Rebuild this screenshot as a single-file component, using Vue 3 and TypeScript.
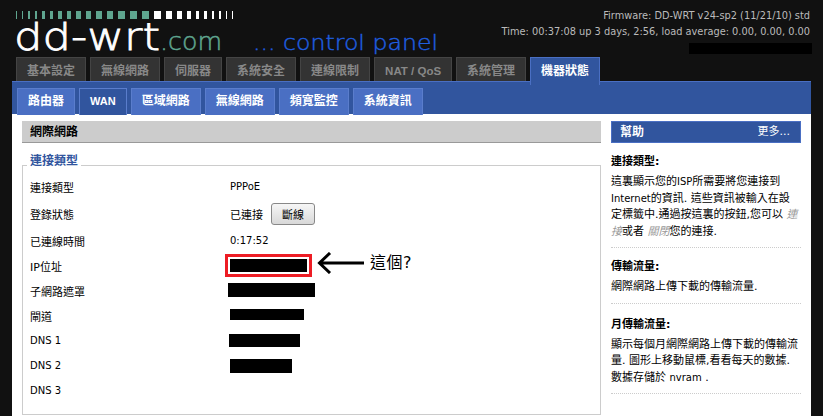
<template>
  <div class="page">
    <header class="header">
      <div class="logo">
        <div class="ticks">
          <span
            v-for="(t, i) in ticks"
            :key="i"
            class="tick"
            :style="{ width: t.w + 'px', marginLeft: t.gap + 'px', background: t.color }"
          ></span>
        </div>
        <svg class="logo-text" width="440" height="36" viewBox="0 0 440 36">
          <text x="0" y="30" class="logo-dd" textLength="146" lengthAdjust="spacingAndGlyphs">dd-wrt</text>
          <text x="146" y="30" class="logo-com" textLength="62" lengthAdjust="spacingAndGlyphs">.com</text>
          <text x="239" y="30" class="logo-panel" textLength="185" lengthAdjust="spacingAndGlyphs">... control panel</text>
        </svg>
      </div>
      <div class="info">
        <div>Firmware: DD-WRT v24-sp2 (11/21/10) std</div>
        <div>Time: 00:37:08 up 3 days, 2:56, load average: 0.00, 0.00, 0.00</div>
        <div class="wan-ip"></div>
      </div>
    </header>

    <nav class="tabs">
      <a
        v-for="t in mainTabs"
        :key="t"
        class="tab"
        :class="{ active: t === '機器狀態', qos: t === 'NAT / QoS' }"
      >{{ t }}</a>
    </nav>

    <div class="subbar">
      <a v-for="t in subTabs" :key="t" class="subtab" :class="{ current: t === 'WAN' }">{{ t }}</a>
    </div>

    <div class="content">
      <main class="main">
        <h2 class="title">網際網路</h2>
        <fieldset class="box">
          <legend>連接類型</legend>
          <div v-for="r in rows" :key="r.label" class="row" :class="{ tall: r.button }">
            <div class="label" :class="{ latin: r.latinLabel }">{{ r.label }}</div>
            <div class="value" :class="{ latin: r.latinValue }">
              <span
                v-if="r.bar"
                class="bar"
                :style="{ width: r.bar + 'px', height: r.barH + 'px', marginLeft: r.off + 'px', marginTop: r.up + 'px' }"
              ></span>
              <template v-else>{{ r.value }}</template>
              <button v-if="r.button" class="btn">{{ r.button }}</button>
            </div>
          </div>
          <div class="callout">
            <div class="redbox"><span></span></div>
            <svg class="arrow" width="50" height="22" viewBox="0 0 50 22">
              <path d="M48 11H4M14 1 3.5 11 14 21" fill="none" stroke="#000" stroke-width="3" />
            </svg>
            <span class="callout-text">這個?</span>
          </div>
        </fieldset>
      </main>

      <aside class="help">
        <div class="help-head"><b>幫助</b><a>更多...</a></div>
        <dl>
          <dt>連接類型:</dt>
          <dd>這裏顯示您的<span class="latin">ISP</span>所需要將您連接到<br /><span class="latin">Internet</span>的資訊. 這些資訊被輸入在設<br />定標籤中.通過按這裏的按鈕,您可以 <i>連<br />接</i>或者 <i>關閉</i>您的連接.</dd>
          <dt>傳輸流量:</dt>
          <dd>網際網路上傳下載的傳輸流量.</dd>
          <dt>月傳輸流量:</dt>
          <dd>顯示每個月網際網路上傳下載的傳輸流<br />量. 圖形上移動鼠標,看看每天的數據.<br />數據存儲於 <span class="latin">nvram</span> .</dd>
        </dl>
      </aside>
    </div>
  </div>
</template>

<script setup lang="ts">
interface Row {
  label: string;
  value?: string;
  button?: string;
  bar?: number;
  barH?: number;
  off?: number;
  up?: number;
  latinLabel?: boolean;
  latinValue?: boolean;
}

const tickWidths = [1, 1, 2, 2, 3, 3, 4, 4, 5, 5, 6, 6, 7, 7, 7, 7, 6, 5, 4, 3, 3, 2, 2, 1, 1];

const ticks = tickWidths.map((w, i) => ({
  w,
  gap: i === 0 ? 0 : 5,
  color: i < 15 ? "#5fa58f" : "#fff",
}));

const mainTabs = ["基本設定", "無線網路", "伺服器", "系統安全", "連線限制", "NAT / QoS", "系統管理", "機器狀態"];
const subTabs = ["路由器", "WAN", "區域網路", "無線網路", "頻寬監控", "系統資訊"];

const rows: Row[] = [
  { label: "連接類型", value: "PPPoE", latinValue: true },
  { label: "登錄狀態", value: "已連接", button: "斷線" },
  { label: "已連線時間", value: "0:17:52", latinValue: true },
  { label: "IP位址" },
  { label: "子網路遮罩", bar: 87, barH: 14, off: -2, up: -2 },
  { label: "閘道", bar: 74, barH: 11, off: 0, up: -2 },
  { label: "DNS 1", bar: 71, barH: 13, off: -1, up: 0, latinLabel: true },
  { label: "DNS 2", bar: 62, barH: 14, off: 0, up: 0, latinLabel: true },
  { label: "DNS 3", latinLabel: true },
];
</script>

<style scoped>
.page {
  width: 823px;
  height: 416px;
  overflow: hidden;
  background: #111;
  font-family: "DejaVu Sans", "Noto Sans CJK TC", sans-serif;
  font-size: 11px;
  color: #000;
}

.latin {
  font-size: 10px;
}

.header {
  height: 57px;
  display: flex;
  justify-content: space-between;
  padding: 11px 13px 0 14px;
  box-sizing: border-box;
}

.ticks {
  display: flex;
  height: 8px;
  margin-left: 2px;
}

.logo-text {
  display: block;
  margin-top: 1px;
  overflow: visible;
}

.logo-dd,
.logo-com,
.logo-panel {
  font-family: "DejaVu Sans", sans-serif;
  font-weight: 200;
}

.logo-dd {
  fill: #fff;
  stroke: #fff;
  stroke-width: 0.8;
  font-size: 38px;
}

.logo-com {
  fill: #5fa58f;
  stroke: #5fa58f;
  stroke-width: 0.5;
  font-size: 24px;
}

.logo-panel {
  fill: #1f5fe0;
  stroke: #1f5fe0;
  stroke-width: 0.4;
  font-size: 22px;
}

.info {
  text-align: right;
  color: #bbb;
  font-size: 9.8px;
  line-height: 16px;
  margin-top: -3px;
  white-space: nowrap;
}

.wan-ip {
  width: 123px;
  height: 11px;
  margin: 3px -2px 0 auto;
  background: #000;
}

.tabs {
  display: flex;
  gap: 4px;
  height: 24px;
  padding-left: 16px;
  position: relative;
  z-index: 1;
}

.tab {
  box-sizing: border-box;
  height: 24px;
  padding: 3px 10px 0;
  background: #333;
  border: 1px solid #444;
  border-bottom: 0;
  color: #888;
  font-family: "Liberation Sans", "Noto Sans CJK TC", sans-serif;
  font-weight: 700;
  font-size: 12px;
  line-height: 20px;
  text-align: center;
  white-space: nowrap;
}

.tab.qos {
  font-size: 11.5px;
}

.tab.active {
  height: 28px;
  background: #31559e;
  border: 1px solid #4a6fc3;
  border-bottom: 0;
  color: #fff;
}

.subbar {
  box-sizing: border-box;
  width: 799px;
  height: 33px;
  margin-left: 12px;
  padding: 6px 0 0 5px;
  background: #31559e;
  border-top: 1px solid #4a6fc3;
  display: flex;
  gap: 4px;
}

.subtab {
  box-sizing: border-box;
  height: 27px;
  padding: 0 10px;
  background: #4a6fc3;
  border: 1px solid #5a7dcc;
  border-bottom: 0;
  color: #fff;
  font-family: "Liberation Sans", "Noto Sans CJK TC", sans-serif;
  font-weight: 700;
  font-size: 12px;
  line-height: 25px;
  white-space: nowrap;
}

.subtab.current {
  background: #31559e;
  font-size: 11px;
}

.content {
  box-sizing: border-box;
  width: 799px;
  height: 302px;
  margin-left: 12px;
  padding: 7px 10px 0;
  background: #fff;
  display: flex;
  gap: 10px;
}

.main {
  width: 579px;
  flex: none;
}

.title {
  margin: 0;
  box-sizing: border-box;
  height: 22px;
  padding-left: 8px;
  background: #ccc;
  border-bottom: 1px solid #999;
  font-size: 12px;
  line-height: 22px;
}

.box {
  position: relative;
  margin: 15px 0 0;
  padding: 2px 7px 0;
  height: 257px;
  box-sizing: border-box;
  border: 1px solid #ccc;
  min-width: 0;
}

legend {
  padding: 0 3px;
  margin-left: -3px;
  height: 14px;
  line-height: 14px;
  color: #31559e;
  font-weight: 700;
  font-size: 12px;
  transform: translateY(-4px);
}

.row {
  display: flex;
  align-items: center;
  height: 25px;
}

.row.tall {
  height: 29px;
}

.label {
  width: 200px;
  flex: none;
}

.value {
  display: flex;
  align-items: center;
  gap: 8px;
}

.bar {
  display: block;
  background: #000;
}

.btn {
  box-sizing: border-box;
  width: 44px;
  height: 22px;
  padding: 0;
  background: linear-gradient(#f6f6f6, #d8d8d8);
  border: 1px solid #888;
  border-radius: 3px;
  font: inherit;
  color: #000;
}

.callout {
  position: absolute;
  left: 202px;
  top: 82px;
  display: flex;
  align-items: flex-start;
}

.redbox {
  box-sizing: border-box;
  width: 87px;
  height: 23px;
  border: 3px solid #ed1c24;
  padding: 2px;
}

.redbox span {
  display: block;
  height: 100%;
  background: #000;
}

.arrow {
  margin: -2px 0 0 4px;
}

.callout-text {
  margin-left: 4px;
  font-size: 16px;
  letter-spacing: 0.5px;
  line-height: 18px;
  white-space: nowrap;
}

.help {
  width: 190px;
  flex: none;
}

.help-head {
  box-sizing: border-box;
  height: 22px;
  display: flex;
  justify-content: space-between;
  padding: 0 10px 0 8px;
  background: #31559e;
  border: 1px solid #4a6fc3;
  color: #fff;
  line-height: 20px;
  font-size: 11px;
}

.help-head b {
  font-size: 12px;
}

dl {
  margin: 9px 0 0;
}

dt {
  font-weight: 700;
  line-height: 20px;
  font-size: 11px;
}

dd {
  margin: 0 0 9px;
  padding: 2px 0 7px;
  line-height: 16.5px;
  border-bottom: 1px dotted #ccc;
  white-space: nowrap;
}

dd:nth-of-type(2) {
  margin-bottom: 11px;
}

dd i {
  color: #999;
}
</style>

<style>
body {
  background: #111;
}
</style>
